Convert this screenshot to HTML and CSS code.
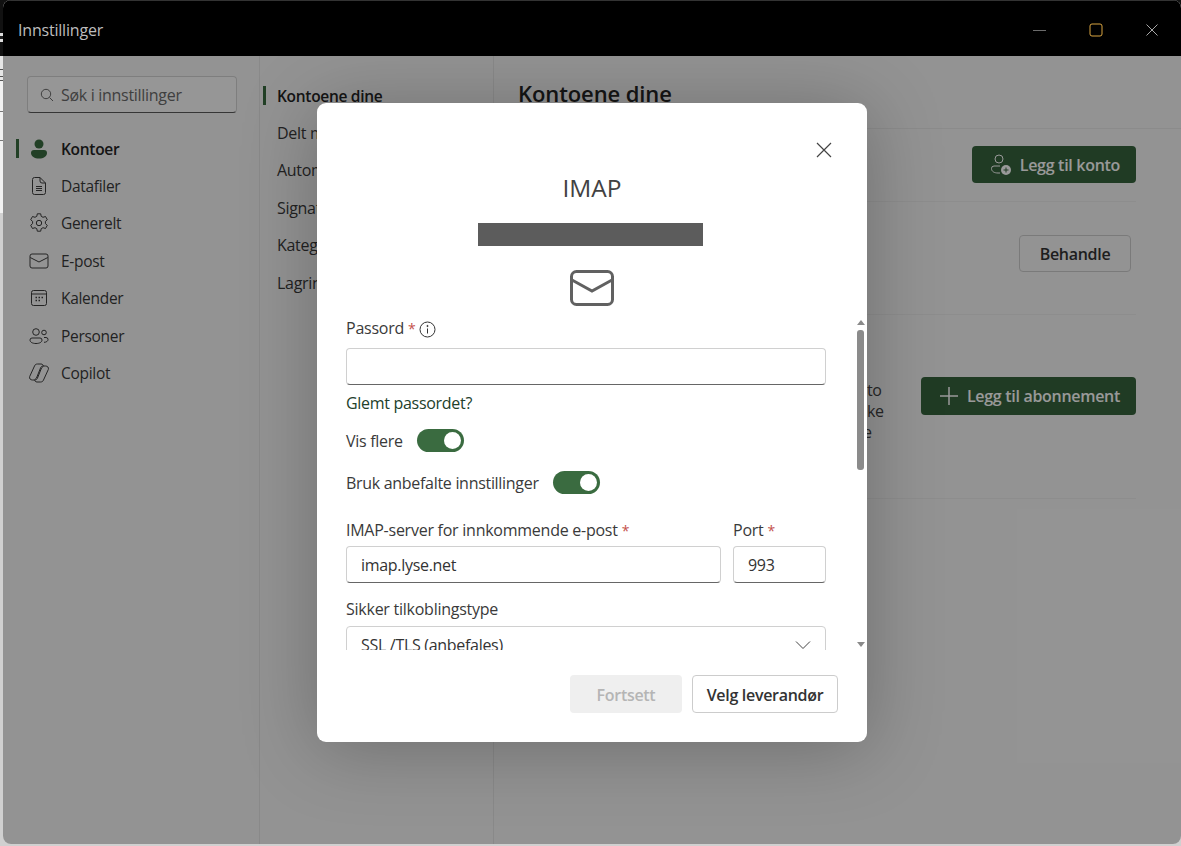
FILE: index.html
```html
<!DOCTYPE html>
<html lang="no">
<head>
    <meta charset="UTF-8">
    <title>Innstillinger</title>
    <link rel="stylesheet" href="styles.css">
</head>
<body>
    <div class="window">
        <header class="titlebar">
            <span class="titlebar-name">Innstillinger</span>
            <div class="window-controls">
                <svg width="14" height="14" viewBox="0 0 14 14"><path d="M0 7.500h13" stroke="#6b6b6b" fill="none"/></svg>
                <svg width="14" height="14" viewBox="0 0 14 14"><rect x="1" y="1" width="12" height="12" rx="2" stroke="#d9a441" fill="none"/></svg>
                <svg width="14" height="14" viewBox="0 0 14 14"><path d="M1.500 1.500l11 11M12.500 1.500l-11 11" stroke="#a8a8a8" fill="none"/></svg>
            </div>
        </header>
        <div class="settings">
            <nav class="side-nav">
                <div class="search-box">
                    <svg width="14" height="14" viewBox="0 0 14 14"><circle cx="6" cy="6" r="4.700" stroke="#6a6a6a" fill="none"/><path d="M9.500 9.500l3.500 3.500" stroke="#6a6a6a" fill="none"/></svg>
                    <span>Søk i innstillinger</span>
                </div>
                <ul class="nav-list">
                    <li class="nav-item active">
                        <svg width="20" height="20" viewBox="0 0 20 20"><circle cx="10" cy="5" r="4.500" fill="#3a6b40"/><path d="M2 14a3 3 0 0 1 3-3h10a3 3 0 0 1 3 3c0 3.500-3.500 5.500-8 5.500S2 17.500 2 14z" fill="#3a6b40"/></svg>
                        Kontoer
                    </li>
                    <li class="nav-item">
                        <svg width="20" height="20" viewBox="0 0 20 20" fill="none" stroke="#3c3c3c"><path d="M3.500 3.500a2 2 0 0 1 2-2h5.500l5.500 5.500v9.500a2 2 0 0 1-2 2h-9a2 2 0 0 1-2-2z"/><path d="M11 1.500v3.500a2 2 0 0 0 2 2h3.500M7 10.500h6M7 12.500h6M7 14.500h6"/></svg>
                        Datafiler
                    </li>
                    <li class="nav-item">
                        <svg width="20" height="20" viewBox="0 0 20 20" fill="none" stroke="#3c3c3c"><circle cx="10" cy="10" r="2.700"/><path d="M8.300 .8l-.5 2.500-1.800 1-2.500-.8-1.800 3.200 1.900 1.700v2.200l-1.900 1.700 1.800 3.200 2.500-.8 1.800 1 .5 2.500h3.400l.5-2.500 1.800-1 2.500.8 1.800-3.200-1.900-1.700v-2.200l1.900-1.700-1.800-3.200-2.500.8-1.800-1-.5-2.500z" stroke-linejoin="round"/></svg>
                        Generelt
                    </li>
                    <li class="nav-item">
                        <svg width="20" height="20" viewBox="0 0 20 20" fill="none" stroke="#3c3c3c"><rect x="1" y="3" width="18" height="14" rx="2"/><path d="M1.200 6.500L10 11l8.800-4.500"/></svg>
                        E-post
                    </li>
                    <li class="nav-item">
                        <svg width="20" height="20" viewBox="0 0 20 20" fill="none" stroke="#3c3c3c"><rect x="2.500" y="2.500" width="15" height="15" rx="2"/><path d="M2.500 6h15"/><path d="M6.500 9.500h1.500M9.500 9.500h1.500M12.500 9.500h1.500M6.500 12.500h1.500M9.500 12.500h1.500" stroke-width="1.500"/></svg>
                        Kalender
                    </li>
                    <li class="nav-item">
                        <svg width="20" height="20" viewBox="0 0 20 20" fill="none" stroke="#3c3c3c"><circle cx="7" cy="6" r="3.300"/><circle cx="15" cy="6.500" r="2.300"/><path d="M1 14a2 2 0 0 1 2-2h8a2 2 0 0 1 2 2c0 2.200-2.500 3.500-6 3.500S1 16.200 1 14zM15 11.500h2a2 2 0 0 1 2 2c0 1.800-1.800 2.800-4 2.800"/></svg>
                        Personer
                    </li>
                    <li class="nav-item">
                        <svg class="copilot" width="22" height="22" viewBox="0 0 22 22" fill="none" stroke="#3c3c3c" stroke-linejoin="round"><path d="M6.500 4C7 2.700 8 2 9.500 2H13c1.500 0 2.200 1 2.400 2.200L13.500 6 9.500 16c-.5 1.300-1.500 2-3 2H4.500C2.500 18 1 16.500 1.700 14.500z"/><path d="M15.500 18c-.5 1.300-1.500 2-3 2H9c-1.500 0-2.200-1-2.400-2.200L8.500 16l4-10c.5-1.300 1.500-2 3-2h2c2 0 3.500 1.500 2.800 3.500z"/></svg>
                        Copilot
                    </li>
                </ul>
            </nav>
            <nav class="sub-nav">
                <a class="sub-item active">Kontoene dine</a>
                <a class="sub-item">Delt med meg</a>
                <a class="sub-item">Automatiske svar</a>
                <a class="sub-item">Signaturer</a>
                <a class="sub-item">Kategorier</a>
                <a class="sub-item">Lagring</a>
            </nav>
            <main class="main">
                <h1 class="main-title">Kontoene dine</h1>
                <section class="row row-accounts">
                    <button class="btn-primary">
                        <svg width="22" height="22" viewBox="0 0 22 22" fill="none" stroke="#fff"><circle cx="9" cy="5" r="4"/><path d="M10 12H4a2.500 2.500 0 0 0-2.500 2.500c0 3 2.800 4.500 6.500 4.500h2"/><circle cx="16" cy="16" r="5" fill="#fff" stroke="none"/><path d="M16 13.500v5M13.500 16h5" stroke="#36633c"/></svg>
                        Legg til konto
                    </button>
                </section>
                <section class="row row-manage">
                    <button class="btn-plain">Behandle</button>
                </section>
                <section class="row row-subs">
                    <p class="row-text">to<br>ke<br><span class="row-text-last">e</span></p>
                    <button class="btn-primary btn-tall">
                        <svg width="20" height="20" viewBox="0 0 20 20" fill="none" stroke="#fff" stroke-width="1.500"><path d="M10 1v18M1 10h18"/></svg>
                        Legg til abonnement
                    </button>
                </section>
            </main>
        </div>
    </div>

    <div class="overlay">
        <div class="dialog">
            <button class="dialog-close">
                <svg width="16" height="16" viewBox="0 0 16 16"><path d="M1 1l14 14M15 1L1 15" stroke="#444" stroke-width="1.200" fill="none"/></svg>
            </button>
            <h2 class="dialog-title">IMAP</h2>
            <div class="redacted"></div>
            <svg class="dialog-icon" width="44" height="36" viewBox="0 0 44 36" fill="none" stroke="#616161" stroke-width="3"><rect x="1.500" y="1.500" width="41" height="33" rx="5"/><path d="M2 10l20 11 20-11"/></svg>
            <div class="dialog-scroll">
                <div class="form">
                    <div class="field-label">Passord <span class="req">*</span>
                        <svg class="info" width="17" height="17" viewBox="0 0 17 17" fill="none" stroke="#333"><circle cx="8.500" cy="8.500" r="7.500"/><path d="M8.500 7.500v5"/><circle cx="8.500" cy="5" r=".6" fill="#333"/></svg>
                    </div>
                    <div class="input input-password"></div>
                    <a class="forgot">Glemt passordet?</a>
                    <div class="toggle-row first">Vis flere <span class="toggle"></span></div>
                    <div class="toggle-row">Bruk anbefalte innstillinger <span class="toggle"></span></div>
                    <div class="server-row">
                        <div class="server-col">
                            <div class="field-label">IMAP-server for innkommende e-post <span class="req">*</span></div>
                            <div class="input input-server">imap.lyse.net</div>
                        </div>
                        <div class="port-col">
                            <div class="field-label">Port <span class="req">*</span></div>
                            <div class="input input-server">993</div>
                        </div>
                    </div>
                    <div class="field-label security">Sikker tilkoblingstype</div>
                    <div class="input select">SSL /TLS (anbefales)
                        <svg width="16" height="10" viewBox="0 0 16 10"><path d="M1 1.500l7 7 7-7" stroke="#444" fill="none"/></svg>
                    </div>
                </div>
                <div class="scrollbar">
                    <span class="arrow up"></span>
                    <span class="thumb"></span>
                    <span class="arrow down"></span>
                </div>
            </div>
            <div class="dialog-footer">
                <button class="btn-disabled">Fortsett</button>
                <button class="btn-outline">Velg leverandør</button>
            </div>
        </div>
    </div>
</body>
</html>
```

FILE: styles.css
```css
* {
    box-sizing: border-box;
}
html, body {
    height: 100%;
}
body {
    margin: 0;
    position: relative;
    overflow: hidden;
    font-family: "Open Sans", "Noto Sans", Arial, sans-serif;
    font-size: 16px;
    letter-spacing: -0.3px;
    color: #333;
    /* sliver of the app behind the settings window */
    background: linear-gradient(#111 0 33px, #ddd 33px 36px, #222 36px 39px, #ddd 39px 42px, #111 42px 56px, #e6e6e6 56px 69px, #555 69px 70px, #e6e6e6 70px 76px, #555 76px 77px, #e6e6e6 77px 80px, #555 80px 81px, #f2f2f2 81px 111px, #777 111px 112px, #f2f2f2 112px 140px, #777 140px 141px, #f2f2f2 141px 213px, #d0d0d0 213px);
}
button {
    font-family: inherit;
    letter-spacing: inherit;
}

/* window behind the dialog */
.window {
    margin-left: 3px;
    height: 844px;
    display: flex;
    flex-direction: column;
    border-radius: 8px;
    overflow: hidden;
    background: #f6f6f6;
}
.titlebar {
    height: 56px;
    flex-shrink: 0;
    background: #000;
    border-top: 1px solid #333;
    color: #bdbdbd;
    display: flex;
    align-items: center;
    justify-content: space-between;
    padding: 2px 22px 0 15px;
}
.titlebar-name {
    font-size: 16px;
    letter-spacing: -0.2px;
}
.window-controls {
    display: flex;
    gap: 42px;
}
.settings {
    flex: 1;
    display: flex;
}

.side-nav {
    width: 257px;
    padding: 20px 0 0 13px;
    border-right: 1px solid #e4e4e4;
}
.search-box {
    width: 210px;
    height: 37px;
    margin-left: 11px;
    padding-left: 12px;
    display: flex;
    align-items: center;
    gap: 7px;
    border: 1px solid #d2d2d2;
    border-bottom-color: #5a5a5a;
    border-radius: 4px;
    background: #fbfbfb;
    color: #6a6a6a;
    font-size: 16px;
}
.nav-list {
    list-style: none;
    margin: 17px 0 0;
    padding: 0;
}
.nav-item {
    height: 37.400px;
    padding-left: 13px;
    display: flex;
    align-items: center;
    gap: 12px;
    font-size: 15.500px;
    color: #3a3a3a;
}
.nav-item.active {
    font-weight: 600;
    color: #242424;
    background: linear-gradient(#3a6b40, #3a6b40) 0 9px / 3px 19px no-repeat;
}
.copilot {
    margin: 0 -1px;
}

.sub-nav {
    width: 234px;
    padding-top: 21px;
    padding-left: 17px;
    border-right: 1px solid #e4e4e4;
    display: flex;
    flex-direction: column;
}
.sub-item {
    height: 37.400px;
    display: flex;
    align-items: center;
    font-size: 16px;
    color: #3a3a3a;
}
.sub-item.active {
    margin-left: -14px;
    padding-left: 14px;
    font-size: 15.500px;
    font-weight: 600;
    color: #242424;
    background: linear-gradient(#3a6b40, #3a6b40) 0 9px / 3px 19px no-repeat;
}

.main {
    flex: 1;
}
.main-title {
    height: 73px;
    margin: 0;
    padding: 22px 0 0 24px;
    font-size: 22px;
    font-weight: 600;
    letter-spacing: -0.1px;
    color: #242424;
    border-bottom: 1px solid #e8e8e8;
}
.row {
    margin-right: 45px;
    display: flex;
    align-items: flex-start;
    justify-content: flex-end;
    border-bottom: 1px solid #ececec;
}
.row-accounts {
    height: 73px;
    padding-top: 17px;
}
.row-manage {
    height: 113px;
    padding: 33px 5px 0 0;
}
.row-subs {
    height: 184px;
    padding-top: 62px;
    gap: 34px;
}
.row-text {
    margin: 3px 0 0;
    width: 20px;
    line-height: 21px;
    color: #424242;
}
.row-text-last {
    margin-left: -4px;
}
.btn-primary {
    height: 37px;
    padding: 0 16px 0 18px;
    display: flex;
    align-items: center;
    gap: 8px;
    border: none;
    border-radius: 4px;
    background: #36633c;
    color: #fff;
    font-size: 16px;
    font-weight: 600;
}
.btn-tall {
    height: 38px;
}
.btn-plain {
    width: 112px;
    height: 37px;
    border: 1px solid #ccc;
    border-radius: 4px;
    background: transparent;
    color: #333;
    font-size: 16px;
    font-weight: 600;
}

/* dialog on top */
.overlay {
    position: absolute;
    left: 3px;
    right: 0;
    top: 56px;
    bottom: 2px;
    background: rgba(0, 0, 0, 0.4);
    border-radius: 0 0 8px 8px;
}
.dialog {
    position: absolute;
    left: 314px;
    top: 47px;
    width: 550px;
    height: 639px;
    padding-top: 29px;
    display: flex;
    flex-direction: column;
    align-items: center;
    border-radius: 9px;
    background: #fff;
    box-shadow: 0 6px 75px rgba(0, 0, 0, 0.26);
}
.dialog-close {
    position: absolute;
    top: 39px;
    right: 35px;
    padding: 0;
    width: 16px;
    height: 16px;
    border: none;
    background: none;
}
.dialog-title {
    margin: 37px 0 0;
    height: 37px;
    line-height: 37px;
    font-size: 24.500px;
    font-weight: 400;
    letter-spacing: 0;
    color: #424242;
}
.redacted {
    width: 225px;
    height: 23px;
    margin-top: 17px;
    margin-left: -3px;
    background: #5c5c5c;
}
.dialog-icon {
    margin-top: 24px;
    flex-shrink: 0;
}
.dialog-scroll {
    margin-top: 10px;
    width: 100%;
    height: 334px;
    display: flex;
    overflow: hidden;
    position: relative;
}
.form {
    width: 480px;
    margin-left: 29px;
}
.field-label {
    height: 24px;
    display: flex;
    align-items: center;
    gap: 4px;
    letter-spacing: -0.25px;
    color: #3a3a3a;
}
.req {
    font-size: 14px;
    color: #c4514c;
}
.info {
    margin-top: 2px;
}
.input {
    height: 37px;
    padding-left: 14px;
    display: flex;
    align-items: center;
    border: 1px solid #d0d0d0;
    border-bottom-color: #666;
    border-radius: 4px;
    color: #333;
}
.input-password {
    margin-top: 8px;
}
.input-server {
    margin-top: 4px;
}
.forgot {
    display: block;
    margin-top: 7px;
    color: #22402a;
}
.toggle-row {
    height: 23px;
    margin-top: 19px;
    display: flex;
    align-items: center;
    gap: 14px;
    color: #3a3a3a;
}
.toggle-row.first {
    margin-top: 15px;
}
.toggle {
    position: relative;
    width: 47px;
    height: 23px;
    border-radius: 12px;
    background: #3a6b40;
}
.toggle::after {
    content: "";
    position: absolute;
    right: 3px;
    top: 3px;
    width: 17px;
    height: 17px;
    border-radius: 50%;
    background: #fff;
}
.server-row {
    margin-top: 24px;
    display: flex;
    gap: 12px;
}
.server-col {
    width: 375px;
}
.port-col {
    width: 93px;
}
.security {
    margin-top: 14px;
}
.select {
    margin-top: 5px;
    justify-content: space-between;
    padding-right: 14px;
    border-bottom-color: #d0d0d0;
}
.scrollbar {
    position: absolute;
    left: 539px;
    top: 0;
    width: 9px;
    height: 100%;
    display: flex;
    flex-direction: column;
    align-items: center;
}
.arrow {
    width: 0;
    height: 0;
    border-left: 4px solid transparent;
    border-right: 4px solid transparent;
}
.arrow.up {
    margin-top: 4px;
    border-bottom: 5px solid #8a8a8a;
}
.arrow.down {
    margin-top: auto;
    margin-bottom: 3px;
    border-top: 5px solid #8a8a8a;
}
.thumb {
    width: 7px;
    height: 140px;
    margin-top: 5px;
    border-radius: 3px;
    background: #8b8b8b;
}
.dialog-footer {
    margin-top: 25px;
    width: 100%;
    padding-right: 29px;
    display: flex;
    justify-content: flex-end;
    gap: 10px;
}
.btn-disabled {
    width: 112px;
    height: 38px;
    padding-top: 2px;
    border: none;
    border-radius: 4px;
    background: #efefef;
    color: #b5b5b5;
    font-size: 16px;
    font-weight: 600;
}
.btn-outline {
    width: 146px;
    height: 38px;
    padding-top: 2px;
    border: 1px solid #ccc;
    border-radius: 4px;
    background: #fff;
    color: #333;
    font-size: 16px;
    font-weight: 600;
}
```
